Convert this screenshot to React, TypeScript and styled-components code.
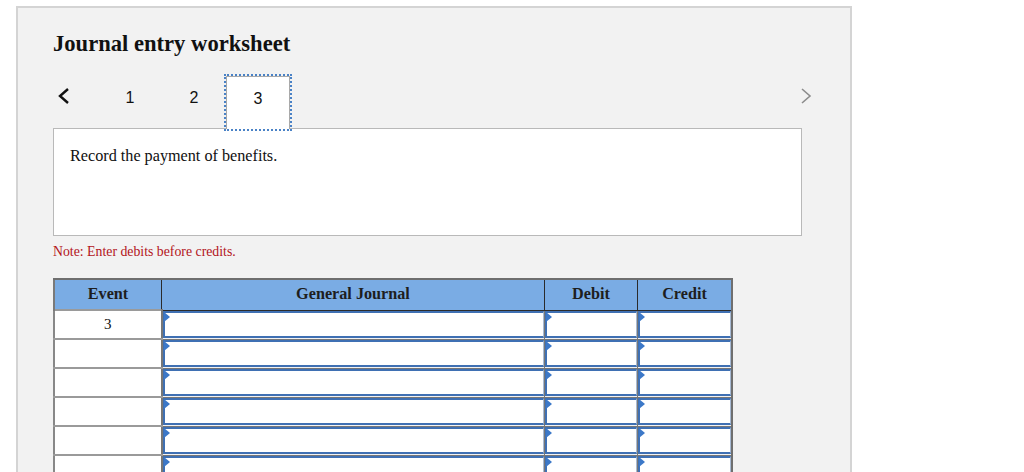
import React from "react";
import styled, { createGlobalStyle } from "styled-components";

const GlobalStyle = createGlobalStyle`
  html, body {
    margin: 0;
    padding: 0;
    background: #ffffff;
    overflow: hidden;
  }
  body {
    font-family: "Liberation Serif", "Times New Roman", serif;
  }
`;

const Panel = styled.div`
  margin: 6px 0 0 16px;
  width: 836px;
  min-height: 480px;
  box-sizing: border-box;
  border: 2px solid #d4d4d4;
  border-bottom: none;
  background: #f2f2f2;
  padding: 22px 0 0 35px;
`;

const Title = styled.h2`
  margin: 0;
  font-size: 22.6px;
  line-height: 28px;
  font-weight: bold;
  color: #111;
`;

const NavRow = styled.div`
  display: flex;
  align-items: flex-start;
  width: 760px;
  height: 52px;
  margin-top: 18px;
`;

const Chevron = styled.button<{ $muted?: boolean }>`
  display: flex;
  align-items: center;
  width: 45px;
  height: 40px;
  padding: 0 0 0 4px;
  border: none;
  background: transparent;
  color: ${(p) => (p.$muted ? "#8c8c8c" : "#111")};
  margin-left: ${(p) => (p.$muted ? "auto" : "0")};
  justify-content: ${(p) => (p.$muted ? "flex-end" : "flex-start")};
`;

const Tab = styled.div<{ $active?: boolean }>`
  width: 64px;
  height: 44px;
  display: flex;
  align-items: center;
  justify-content: center;
  box-sizing: border-box;
  font-family: "Liberation Sans", Arial, sans-serif;
  font-size: 16px;
  color: #111;
  ${(p) =>
    p.$active &&
    `
    height: 53px;
    background: #ffffff;
    border: 1px solid #a9a9a9;
    border-bottom: none;
    outline: 2px dotted #4a82c6;
    outline-offset: 0;
    position: relative;
    z-index: 1;
    padding-bottom: 8px;
  `}
`;

const Prompt = styled.div`
  width: 749px;
  height: 108px;
  box-sizing: border-box;
  background: #ffffff;
  border: 1px solid #b9b9b9;
  padding: 18px 16px;
  font-size: 16.2px;
  color: #111;
`;

const Note = styled.p`
  margin: 8px 0 0;
  font-size: 13.8px;
  color: #b3141b;
`;

const Table = styled.table`
  margin-top: 18px;
  width: 673px;
  border-collapse: collapse;
  table-layout: fixed;
`;

const HeadCell = styled.th<{ $w: number }>`
  width: ${(p) => p.$w}px;
  height: 29px;
  padding: 0;
  background: #7aace4;
  border: 1px solid #2b2b2b;
  border-top: 2px solid #6f6f6f;
  font-size: 16.2px;
  font-weight: bold;
  color: #1e1e1e;
  text-align: center;
  &:first-child {
    border-left: 2px solid #7a7a7a;
  }
  &:last-child {
    border-right: 2px solid #6f6f6f;
  }
`;

const EventCell = styled.td`
  height: 27px;
  padding: 0;
  background: #ffffff;
  border: 2px solid #9a9a9a;
  border-right: 2px solid #777;
  border-left: 2px solid #888;
  text-align: center;
  font-size: 15px;
  color: #111;
`;

const InputCell = styled.td`
  height: 27px;
  padding: 0;
  border: 1px solid #777;
  &:last-child {
    border-right: 2px solid #6f6f6f;
  }
`;

const Field = styled.div`
  position: relative;
  height: 27px;
  box-sizing: border-box;
  background: #ffffff;
  border-top: 2px solid #3f70b3;
  border-bottom: 2px solid #3f70b3;
  border-left: 2px solid #3f70b3;
  border-right: 1px solid #a8bad3;
  &::before {
    content: "";
    position: absolute;
    left: -1px;
    top: -1px;
    border-top: 5px solid transparent;
    border-bottom: 5px solid transparent;
    border-left: 6px solid #3c78c8;
  }
`;

const LeftArrow = () => (
  <svg width="14" height="18" viewBox="0 0 14 18" fill="none">
    <path d="M11 2 L3 9 L11 16" stroke="currentColor" strokeWidth="2.4" />
  </svg>
);

const RightArrow = () => (
  <svg width="14" height="18" viewBox="0 0 14 18" fill="none">
    <path d="M3 2 L11 9 L3 16" stroke="currentColor" strokeWidth="1.6" />
  </svg>
);

const columns = [
  { label: "Event", w: 106 },
  { label: "General Journal", w: 382 },
  { label: "Debit", w: 92 },
  { label: "Credit", w: 93 },
];

const rows = ["3", "", "", "", "", ""];

const App: React.FC = () => {
  return (
    <>
      <GlobalStyle />
      <Panel>
        <Title>Journal entry worksheet</Title>
        <NavRow>
          <Chevron>
            <LeftArrow />
          </Chevron>
          <Tab>1</Tab>
          <Tab>2</Tab>
          <Tab $active>3</Tab>
          <Chevron $muted>
            <RightArrow />
          </Chevron>
        </NavRow>
        <Prompt>Record the payment of benefits.</Prompt>
        <Note>Note: Enter debits before credits.</Note>
        <Table>
          <thead>
            <tr>
              {columns.map((c) => (
                <HeadCell key={c.label} $w={c.w}>
                  {c.label}
                </HeadCell>
              ))}
            </tr>
          </thead>
          <tbody>
            {rows.map((ev, i) => (
              <tr key={i}>
                <EventCell>{ev}</EventCell>
                <InputCell>
                  <Field />
                </InputCell>
                <InputCell>
                  <Field />
                </InputCell>
                <InputCell>
                  <Field />
                </InputCell>
              </tr>
            ))}
          </tbody>
        </Table>
      </Panel>
    </>
  );
};

export default App;
